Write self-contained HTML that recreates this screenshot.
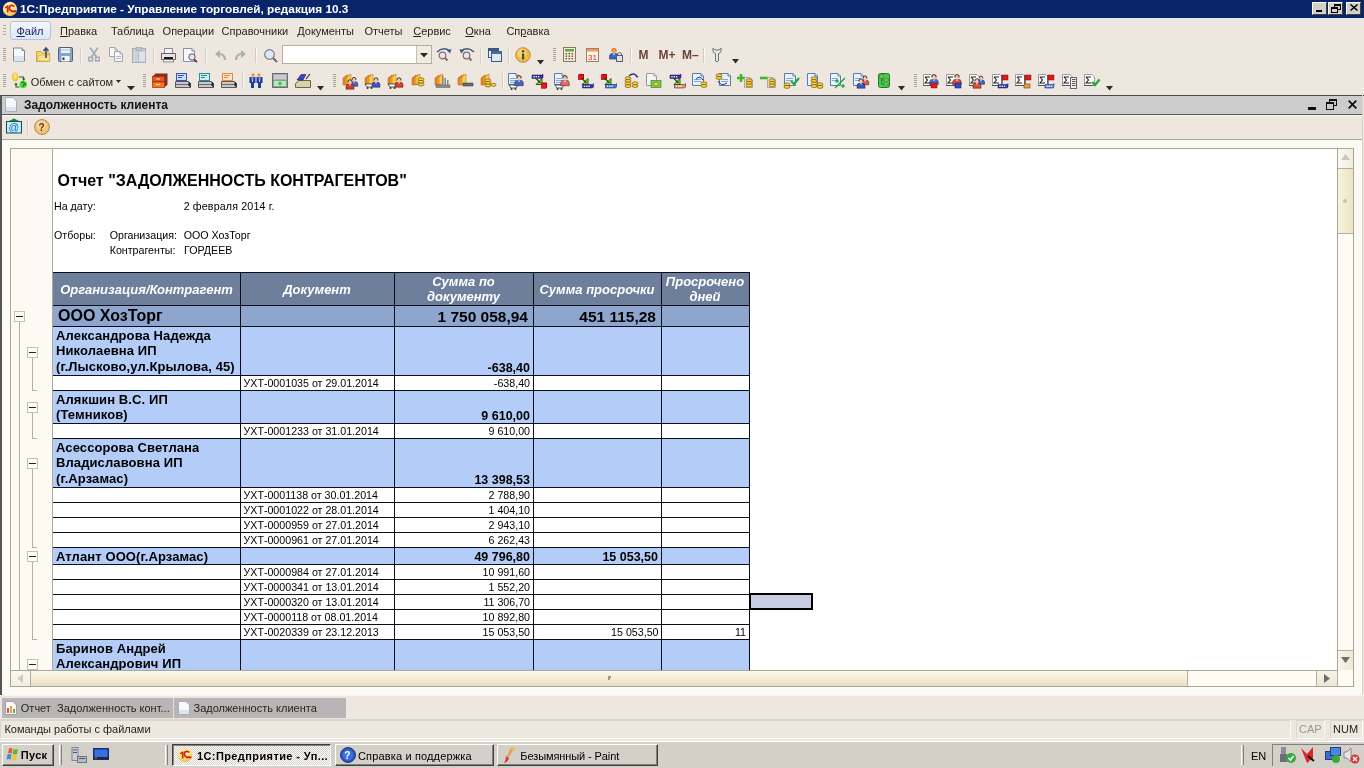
<!DOCTYPE html><html><head><meta charset="utf-8"><style>
*{box-sizing:border-box}
html,body{margin:0;padding:0}
body{width:1364px;height:768px;overflow:hidden;position:relative;background:#EEE7E0;font-family:"Liberation Sans",sans-serif;font-size:11px;color:#2a2418}
.a{position:absolute}
html{will-change:transform}
.nw{white-space:nowrap}
svg{position:absolute;overflow:visible}
#title{left:0;top:0;width:1364px;height:18px;background:#0A246A}
.wbtn{width:16px;height:14px;background:#D4D0C8;border-top:1px solid #fff;border-left:1px solid #fff;border-right:1px solid #404040;border-bottom:1px solid #404040}
.grip{width:3px;background:repeating-linear-gradient(to bottom,#B3AA9C 0 1px,transparent 1px 3px)}
.sep{width:2px;border-left:1px solid #CFC7BA;border-right:1px solid #FBF9F6}
.dd{width:0;height:0;border-left:4px solid transparent;border-right:4px solid transparent;border-top:4px solid #2a2418}
.cell{position:absolute;overflow:hidden;white-space:nowrap}
.hl{position:absolute;height:1px;background:#0D0D1A}
.vl{position:absolute;width:1px;background:#0D0D1A}
.doc{font-size:10.67px;color:#000;line-height:12px}
.bn{font-weight:bold;color:#000}
</style></head><body>
<div id="title" class="a">
<svg style="left:2px;top:1px" width="16" height="16" viewBox="0 0 16 16"><defs><radialGradient id="lg" cx="0.45" cy="0.35" r="0.7"><stop offset="0" stop-color="#FFFBE8"/><stop offset="0.6" stop-color="#FBE27A"/><stop offset="1" stop-color="#F0B040"/></radialGradient></defs><circle cx="8" cy="8" r="7.2" fill="url(#lg)"/><path d="M2.8 6.2L5 4.6H6.6V11.6H4.8V6.6L3.4 7.4Z" fill="#C8300E"/><path d="M12.2 5.6Q11.2 4.3 9.6 4.4Q7.4 4.6 7.4 7.3Q7.5 9.4 9.4 9.6" fill="none" stroke="#D8200E" stroke-width="1.7"/><rect x="8.8" y="9.3" width="5.6" height="2" fill="#D8200E"/></svg>
<div class="a nw" style="left:20px;top:2px;color:#fff;font-weight:bold;font-size:11.8px;letter-spacing:0px;line-height:14px">1С:Предприятие - Управление торговлей, редакция 10.3</div>
<div class="a wbtn" style="left:1312px;top:2px;width:15px;height:13px"></div>
<div class="a wbtn" style="left:1328px;top:2px;width:15px;height:13px"></div>
<div class="a wbtn" style="left:1346px;top:2px;width:15px;height:13px"></div>
<div class="a" style="left:1316px;top:10px;width:6px;height:2px;background:#000"></div>
<svg style="left:1331px;top:4px" width="10" height="9"><rect x="3.5" y="0.5" width="6" height="5" fill="none" stroke="#000"/><rect x="3" y="0" width="7" height="2" fill="#000"/><rect x="0.5" y="3.5" width="6" height="5" fill="#D4D0C8" stroke="#000"/><rect x="0" y="3" width="7" height="2" fill="#000"/></svg>
<svg style="left:1350px;top:4px" width="8" height="7"><path d="M0.5 0.5L7.5 6.5M7.5 0.5L0.5 6.5" stroke="#000" stroke-width="1.6"/></svg>
</div>
<div class="a" style="left:0;top:18px;width:1364px;height:1px;background:#E6ECEE"></div>
<div class="a grip" style="left:3px;top:25px;height:12px"></div>
<div class="a" style="left:10px;top:21px;width:41px;height:19px;border:1px solid #B6C1DC;border-radius:3px;background:linear-gradient(#F4F7FD,#DCE6F8)"></div>
<div class="a nw" style="left:16.4px;top:24px;line-height:14px;color:#1F2A66"><u>Ф</u>айл</div>
<div class="a nw" style="left:60px;top:24px;line-height:14px;color:#2a2418"><u>П</u>равка</div>
<div class="a nw" style="left:110.9px;top:24px;line-height:14px;color:#2a2418">Таблица</div>
<div class="a nw" style="left:162.6px;top:24px;line-height:14px;color:#2a2418">Операции</div>
<div class="a nw" style="left:221.5px;top:24px;line-height:14px;color:#2a2418">Справочники</div>
<div class="a nw" style="left:297.2px;top:24px;line-height:14px;color:#2a2418">Документы</div>
<div class="a nw" style="left:364.5px;top:24px;line-height:14px;color:#2a2418">Отчеты</div>
<div class="a nw" style="left:413.2px;top:24px;line-height:14px;color:#2a2418"><u>С</u>ервис</div>
<div class="a nw" style="left:465.3px;top:24px;line-height:14px;color:#2a2418"><u>О</u>кна</div>
<div class="a nw" style="left:506.4px;top:24px;line-height:14px;color:#2a2418">Сп<u>р</u>авка</div>
<div class="a" style="left:3px;top:48px;width:3px;height:14px;background:repeating-linear-gradient(to bottom,#ABA397 0 1px,transparent 1px 2px)"></div>
<svg style="left:13px;top:47px" width="16" height="16" viewBox="0 0 16 16"><path d="M0.5 1.0H9L11.5 3.5V14.0H0.5Z" fill="#F7F9FD" stroke="#7C8593"/><path d="M9 1.0V3.5H11.5" fill="#DDE6F0" stroke="#7C8593"/><rect x="1" y="9" width="10" height="5" fill="#DCE5F4"/></svg>
<svg style="left:36px;top:46px" width="16" height="16" viewBox="0 0 16 16"><path d="M0.5 5.5H5L6.5 7H13.5V15.5H0.5Z" fill="#F4D870" stroke="#C8A040"/><path d="M1 15L3 9H14L13.5 15.5Z" fill="#F8E48A" stroke="#C8A040" stroke-width="0.6"/><path d="M10 12V2.5M7.5 5L10 2L12.5 5" stroke="#3E4E66" stroke-width="1.6" fill="none"/></svg>
<svg style="left:58px;top:47px" width="16" height="16" viewBox="0 0 16 16"><rect x="0.5" y="0.5" width="14" height="14" rx="1" fill="#86A6C4" stroke="#4A6078"/><rect x="3" y="1" width="9" height="5" fill="#E8F0F8"/><rect x="3" y="2.5" width="9" height="1" fill="#A8C0D8"/><rect x="3.5" y="9" width="8" height="5.5" fill="#F2F4F6"/><rect x="4.5" y="10.5" width="2" height="2.5" fill="#2A3A4A"/></svg>
<div class="a" style="left:80px;top:48px;width:2px;height:15px;border-left:1px solid #D3CCC0;border-right:1px solid #FAF8F4"></div>
<svg style="left:88px;top:47px" width="12" height="15" viewBox="0 0 12 15"><path d="M2 0.5L8.5 10M10 0.5L3.5 10" stroke="#A4AAB6" stroke-width="1.8"/><rect x="0.8" y="10.3" width="3.6" height="3.6" fill="none" stroke="#A4AAB6" stroke-width="1.5"/><rect x="7.6" y="10.3" width="3.6" height="3.6" fill="none" stroke="#A4AAB6" stroke-width="1.5"/></svg>
<svg style="left:109px;top:47px" width="16" height="16" viewBox="0 0 16 16"><path d="M0.5 0.5H6L8.5 3V9.5H0.5Z" fill="#F6F7FA" stroke="#A0A4AC"/><path d="M6 0.5V3H8.5" fill="#DDE6F0" stroke="#A0A4AC"/><path d="M5.5 4.5H11L13.5 7V14.5H5.5Z" fill="#F6F7FA" stroke="#A0A4AC"/><path d="M11 4.5V7H13.5" fill="#DDE6F0" stroke="#A0A4AC"/><rect x="7" y="9" width="5" height="1" fill="#B8BCC4"/><rect x="7" y="11" width="5" height="1" fill="#B8BCC4"/></svg>
<svg style="left:132px;top:47px" width="16" height="16" viewBox="0 0 16 16"><rect x="0.5" y="1.5" width="13" height="14" fill="#CDD2DA" stroke="#A6ABB4"/><rect x="4" y="0.5" width="6" height="3" fill="#BFC3CA" stroke="#A6ABB4" stroke-width="0.8"/><rect x="6.5" y="4" width="7" height="11" fill="#DCE2EC" stroke="#B0B5BE" stroke-width="0.8"/></svg>
<div class="a" style="left:153px;top:48px;width:2px;height:15px;border-left:1px solid #D3CCC0;border-right:1px solid #FAF8F4"></div>
<svg style="left:161px;top:48px" width="15" height="14" viewBox="0 0 15 14"><rect x="3.5" y="0.5" width="8" height="5" fill="#F4F6FA" stroke="#8A8E96"/><path d="M0.5 5.5H14.5V11.5H0.5Z" fill="#E8E6E2" stroke="#66625E"/><rect x="3" y="9" width="9" height="3" fill="#1A1A1A"/><rect x="2.5" y="11.5" width="10" height="2.5" fill="#F0F0F0" stroke="#77736E" stroke-width="0.8"/></svg>
<svg style="left:183px;top:48px" width="16" height="16" viewBox="0 0 16 16"><path d="M0.5 0.5H9L11.5 3V13.5H0.5Z" fill="#F6F8FC" stroke="#8A929E"/><path d="M9 0.5V3H11.5" fill="#DDE6F0" stroke="#8A929E"/><circle cx="9" cy="9" r="3.2" fill="#DDE6F2" stroke="#5A5A5A" stroke-width="1"/><path d="M11 11.5L14 14" stroke="#6A3A2A" stroke-width="2"/></svg>
<div class="a" style="left:205px;top:48px;width:2px;height:15px;border-left:1px solid #D3CCC0;border-right:1px solid #FAF8F4"></div>
<svg style="left:215px;top:50px" width="11" height="11" viewBox="0 0 11 11"><path d="M10 10Q10 4 4 4" stroke="#A8B4A8" stroke-width="2.2" fill="none"/><path d="M0 4L5 0V8Z" fill="#A8B4A8"/></svg>
<svg style="left:235px;top:50px" width="11" height="11" viewBox="0 0 11 11"><path d="M1 10Q1 4 7 4" stroke="#A8B4A8" stroke-width="2.2" fill="none"/><path d="M11 4L6 0V8Z" fill="#A8B4A8"/></svg>
<div class="a" style="left:255px;top:48px;width:2px;height:15px;border-left:1px solid #D3CCC0;border-right:1px solid #FAF8F4"></div>
<svg style="left:264px;top:49px" width="14" height="14" viewBox="0 0 14 14"><circle cx="5.5" cy="5.5" r="4.8" fill="#DCE8F8" stroke="#7A7E86" stroke-width="1.2"/><path d="M9 9L13 13" stroke="#7A6A60" stroke-width="2.2"/></svg>
<div class="a" style="left:282px;top:45px;width:150px;height:19px;background:#FFFFFF;border:1px solid #B7AF98"></div>
<div class="a" style="left:416px;top:46px;width:15px;height:17px;background:#F1ECE2;border-left:1px solid #C8C0AC"></div>
<svg style="left:420px;top:53px" width="8" height="5"><path d="M0 0H8L4.0 4.5Z" fill="#2F2A22"/></svg>
<svg style="left:436px;top:47px" width="16" height="15" viewBox="0 0 16 15"><path d="M1 5Q7 -1 14 4" stroke="#3E5A82" stroke-width="1.6" fill="none"/><path d="M15.5 2L14 6.5L11 3.5Z" fill="#3E5A82"/><circle cx="6.5" cy="8.5" r="3.3" fill="#E6E8F0" stroke="#8A6A66" stroke-width="1.2"/><path d="M9 11L11.5 13.5" stroke="#8A6A66" stroke-width="2"/></svg>
<svg style="left:459px;top:47px" width="16" height="15" viewBox="0 0 16 15"><path d="M15 5Q9 -1 2 4" stroke="#3E5A82" stroke-width="1.6" fill="none"/><path d="M0.5 2L2 6.5L5 3.5Z" fill="#3E5A82"/><circle cx="7.5" cy="8.5" r="3.3" fill="#E6E8F0" stroke="#8A6A66" stroke-width="1.2"/><path d="M10 11L12.5 13.5" stroke="#8A6A66" stroke-width="2"/></svg>
<div class="a" style="left:480px;top:48px;width:2px;height:15px;border-left:1px solid #D3CCC0;border-right:1px solid #FAF8F4"></div>
<svg style="left:488px;top:48px" width="14" height="14" viewBox="0 0 14 14"><rect x="0.5" y="0.5" width="10" height="9" fill="#E8EEF6" stroke="#3E5A82"/><rect x="0.5" y="0.5" width="10" height="2.5" fill="#3E5A82"/><rect x="3.5" y="3.5" width="10" height="10" fill="#DDE8F6" stroke="#3E5A82"/><rect x="3.5" y="3.5" width="10" height="2.5" fill="#4E6E9A"/></svg>
<div class="a" style="left:508px;top:48px;width:2px;height:15px;border-left:1px solid #D3CCC0;border-right:1px solid #FAF8F4"></div>
<svg style="left:515px;top:47px" width="16" height="16" viewBox="0 0 16 16"><circle cx="8" cy="8" r="7.3" fill="#F3B94A" stroke="#B07818" stroke-width="0.8"/><circle cx="7" cy="6" r="4.5" fill="#FAD88A" opacity="0.7"/><rect x="7" y="6.5" width="2.2" height="6" fill="#3A5A10"/><circle cx="8.1" cy="4.2" r="1.2" fill="#3A5A10"/></svg>
<svg style="left:537px;top:60px" width="7" height="5"><path d="M0 0H7L3.5 4.5Z" fill="#2F2A22"/></svg>
<div class="a" style="left:553px;top:48px;width:3px;height:13px;background:repeating-linear-gradient(to bottom,#ABA397 0 1px,transparent 1px 2px)"></div>
<svg style="left:563px;top:47px" width="13" height="15" viewBox="0 0 13 15"><rect x="0.5" y="0.5" width="12" height="14" fill="#F6EEDC" stroke="#8A7A5A"/><rect x="2" y="2" width="9" height="2.5" fill="#5AAA4A"/><rect x="2.5" y="6.0" width="1.6" height="1.4" fill="#7A5028"/><rect x="2.5" y="8.5" width="1.6" height="1.4" fill="#7A5028"/><rect x="2.5" y="11.0" width="1.6" height="1.4" fill="#7A5028"/><rect x="5.5" y="6.0" width="1.6" height="1.4" fill="#7A5028"/><rect x="5.5" y="8.5" width="1.6" height="1.4" fill="#7A5028"/><rect x="5.5" y="11.0" width="1.6" height="1.4" fill="#7A5028"/><rect x="8.5" y="6.0" width="1.6" height="1.4" fill="#7A5028"/><rect x="8.5" y="8.5" width="1.6" height="1.4" fill="#7A5028"/><rect x="8.5" y="11.0" width="1.6" height="1.4" fill="#7A5028"/></svg>
<svg style="left:586px;top:47px" width="13" height="15" viewBox="0 0 13 15"><rect x="0.5" y="1.5" width="12" height="13" fill="#FBF3E8" stroke="#A08060"/><rect x="1" y="2" width="11" height="2.5" fill="#F29A5A"/><text x="2" y="12.5" font-family="Liberation Sans" font-size="8" fill="#D2381E">31</text></svg>
<svg style="left:609px;top:48px" width="15" height="15" viewBox="0 0 15 15"><path d="M0.5 11.1V7.95Q0.5 5.34 5 5.34Q9.5 5.34 9.5 7.95V11.1Z" fill="#2E6AD0" stroke="#3A1A1A" stroke-width="0.5"/><path d="M3.65 5.52L5 7.5L6.35 5.52Z" fill="#FFFFFF" opacity="0.8"/><circle cx="5" cy="3" r="2.3400000000000003" fill="#F2A848"/><path d="M2.6599999999999997 3.54Q2.48 0.2999999999999998 5 0.48Q7.52 0.2999999999999998 7.34 3.54" fill="none" stroke="#C86A10" stroke-width="0.9900000000000001"/><rect x="7.5" y="7.5" width="6" height="6" fill="#DDE3EA" stroke="#556070"/><path d="M8.5 7.5V5.5Q10.5 3.5 12.5 5.5V7.5" fill="none" stroke="#556070"/></svg>
<div class="a" style="left:630px;top:48px;width:2px;height:15px;border-left:1px solid #D3CCC0;border-right:1px solid #FAF8F4"></div>
<div class="a nw" style="left:638.5px;top:49px;font-weight:bold;font-size:12px;line-height:13px;color:#6A4634">M</div>
<div class="a nw" style="left:658.5px;top:49px;font-weight:bold;font-size:12px;line-height:13px;color:#6A4634">M+</div>
<div class="a nw" style="left:682px;top:49px;font-weight:bold;font-size:12px;line-height:13px;color:#6A4634">M&#8211;</div>
<div class="a" style="left:703px;top:48px;width:2px;height:15px;border-left:1px solid #D3CCC0;border-right:1px solid #FAF8F4"></div>
<svg style="left:712px;top:47px" width="10" height="16" viewBox="0 0 10 16"><path d="M1 1V4Q1 6 3.5 6.5V14Q5 15.5 6.5 14V6.5Q9 6 9 4V1L7 3H3Z" fill="#E4E6EA" stroke="#6E7480" stroke-width="1"/></svg>
<svg style="left:732px;top:59px" width="7" height="5"><path d="M0 0H7L3.5 4.5Z" fill="#2F2A22"/></svg>
<div class="a" style="left:3px;top:74px;width:3px;height:13px;background:repeating-linear-gradient(to bottom,#ABA397 0 1px,transparent 1px 2px)"></div>
<svg style="left:11px;top:72px" width="16" height="16" viewBox="0 0 16 16"><ellipse cx="4.2" cy="5" rx="3.2" ry="4.6" fill="#F2C23A"/><ellipse cx="4.2" cy="4.2" rx="1.8" ry="3" fill="#FBE070"/><path d="M8 5H12.5V7.5" stroke="#1E6A1E" stroke-width="1.1" fill="none"/><path d="M11 6.5H14.5L12.7 9Z" fill="#1E6A1E"/><circle cx="12.2" cy="12.5" r="3.7" fill="#4ED838"/><path d="M10 10.5Q12 9.5 13 11T11.5 14.5M13.5 13Q15 13 14.5 11" stroke="#1A8A1A" stroke-width="1.2" fill="none"/><path d="M8.5 15H5V12" stroke="#1E6A1E" stroke-width="1.1" fill="none"/><path d="M3.2 13H6.8L5 10.5Z" fill="#1E6A1E"/></svg>
<div class="a nw" style="left:30.8px;top:76px;line-height:13px;color:#2a2418">Обмен с сайтом</div>
<svg style="left:116px;top:80px" width="5" height="3" viewBox="0 0 5 3"><path d="M0 0H5L2.5 3Z" fill="#2F2A22"/></svg>
<svg style="left:127px;top:86px" width="8" height="5"><path d="M0 0H8L4.0 4.5Z" fill="#2F2A22"/></svg>
<div class="a" style="left:143px;top:74px;width:3px;height:13px;background:repeating-linear-gradient(to bottom,#ABA397 0 1px,transparent 1px 2px)"></div>
<svg style="left:152px;top:73px" width="16" height="16" viewBox="0 0 16 16"><path d="M0.5 3.5L3.5 0.5H15.5V11.5L12.5 14.5H0.5Z" fill="#8A2A1A"/><rect x="0.5" y="3.5" width="12" height="5" fill="#E8581E" stroke="#9A3410" stroke-width="0.6"/><rect x="0.5" y="9" width="12" height="5.5" fill="#F07A2A" stroke="#9A3410" stroke-width="0.6"/><rect x="4" y="5.5" width="4" height="1" fill="#FFE0B0"/><rect x="4" y="11" width="4" height="1" fill="#FFE0B0"/></svg>
<svg style="left:175px;top:73px" width="16" height="16" viewBox="0 0 16 16"><rect x="1.5" y="0.5" width="10" height="7" fill="#C8DCF8" stroke="#3A56B0"/><rect x="3" y="2" width="6" height="1" fill="#3A56B0"/><rect x="3" y="4" width="4" height="1" fill="#3A56B0"/><path d="M0.5 8.5H13.5L15.5 10.5V14.5H0.5Z" fill="#C8C8C8" stroke="#3A3A3A" stroke-width="0.8"/><rect x="1" y="11" width="14" height="1" fill="#6A6A6A"/><path d="M13.5 8.5L15.5 10.5V14.5L13.5 12.5Z" fill="#222"/></svg>
<svg style="left:198px;top:73px" width="16" height="16" viewBox="0 0 16 16"><rect x="1.5" y="0.5" width="10" height="7" fill="#C8F0F0" stroke="#2E8A9A"/><rect x="3" y="2" width="6" height="1" fill="#2E8A9A"/><rect x="3" y="4" width="4" height="1" fill="#2E8A9A"/><path d="M0.5 8.5H13.5L15.5 10.5V14.5H0.5Z" fill="#C8C8C8" stroke="#3A3A3A" stroke-width="0.8"/><rect x="1" y="11" width="14" height="1" fill="#6A6A6A"/><path d="M13.5 8.5L15.5 10.5V14.5L13.5 12.5Z" fill="#222"/></svg>
<svg style="left:221px;top:73px" width="16" height="16" viewBox="0 0 16 16"><rect x="1.5" y="0.5" width="10" height="7" fill="#FBE4C8" stroke="#E08A3A"/><rect x="3" y="2" width="6" height="1" fill="#E08A3A"/><rect x="3" y="4" width="4" height="1" fill="#E08A3A"/><path d="M0.5 8.5H13.5L15.5 10.5V14.5H0.5Z" fill="#C8C8C8" stroke="#3A3A3A" stroke-width="0.8"/><rect x="1" y="11" width="14" height="1" fill="#6A6A6A"/><path d="M13.5 8.5L15.5 10.5V14.5L13.5 12.5Z" fill="#222"/></svg>
<div class="a" style="left:242px;top:73px;width:2px;height:16px;border-left:1px solid #D3CCC0;border-right:1px solid #FAF8F4"></div>
<svg style="left:249px;top:73px" width="14" height="16" viewBox="0 0 14 16"><circle cx="4" cy="2" r="1.8" fill="#D89A5A"/><circle cx="10" cy="2" r="1.8" fill="#D89A5A"/><path d="M0.5 4H6.5V10H5V15H2V10H0.5Z" fill="#1E3A9A"/><path d="M7.5 4H13.5V10H12V15H9V10H7.5Z" fill="#1E3A9A"/><path d="M3 4L3.5 9L4 4M10 4L10.5 9L11 4" stroke="#fff" stroke-width="0.6"/></svg>
<svg style="left:272px;top:73px" width="16" height="16" viewBox="0 0 16 16"><rect x="0.5" y="0.5" width="15" height="14" fill="#A8ACAE" stroke="#6A6E70"/><rect x="2" y="2" width="12" height="4" fill="#C8CCCE"/><rect x="1.5" y="7.5" width="13" height="6" fill="#B8E8C0" stroke="#5A9A6A" stroke-width="0.6"/><circle cx="8" cy="10.5" r="2" fill="#6ABA7A"/></svg>
<svg style="left:295px;top:73px" width="16" height="16" viewBox="0 0 16 16"><path d="M0.5 10.5L4 7.5H15.5V14.5H0.5Z" fill="#D8D4A8" stroke="#6A6640"/><path d="M2 7L6 1.5H11L8 7Z" fill="#3A48B8" stroke="#1A2470" stroke-width="0.6"/><path d="M11 6L15 1" stroke="#2A2A2A" stroke-width="1.2"/></svg>
<svg style="left:317px;top:86px" width="7" height="5"><path d="M0 0H7L3.5 4.5Z" fill="#2F2A22"/></svg>
<div class="a" style="left:333px;top:74px;width:3px;height:13px;background:repeating-linear-gradient(to bottom,#ABA397 0 1px,transparent 1px 2px)"></div>
<svg style="left:343px;top:73px" width="16" height="16" viewBox="0 0 16 16"><path d="M0 5.0L4 2.0V12.0H0Z" fill="#E9822A" stroke="#C0621A" stroke-width="0.5"/><path d="M2 4.5L6 1.5V11.5H2Z" fill="#F2A93A" stroke="#C0621A" stroke-width="0.5"/><path d="M4 4.0L8 1.0V11.0H4Z" fill="#F7D447" stroke="#C0621A" stroke-width="0.5"/><path d="M7.25 13.25V10.625Q7.25 8.45 11 8.45Q14.75 8.45 14.75 10.625V13.25Z" fill="#3E6AC8" stroke="#3A1A1A" stroke-width="0.5"/><path d="M9.875 8.6L11 10.25L12.125 8.6Z" fill="#FFFFFF" opacity="0.8"/><circle cx="11" cy="6.5" r="1.9500000000000002" fill="#F6C8B0"/><path d="M9.05 6.95Q8.9 4.25 11 4.4Q13.1 4.25 12.95 6.95" fill="none" stroke="#2A1A10" stroke-width="0.8250000000000001"/><path d="M3.0 16.2V13.4Q3.0 11.08 7 11.08Q11.0 11.08 11.0 13.4V16.2Z" fill="#D83A2A" stroke="#3A1A1A" stroke-width="0.5"/><path d="M5.8 11.24L7 13.0L8.2 11.24Z" fill="#FFFFFF" opacity="0.8"/><circle cx="7" cy="9" r="2.08" fill="#F6C8B0"/><path d="M4.92 9.48Q4.76 6.6 7 6.76Q9.24 6.6 9.08 9.48" fill="none" stroke="#2A1A10" stroke-width="0.8800000000000001"/></svg>
<svg style="left:365px;top:73px" width="16" height="16" viewBox="0 0 16 16"><path d="M0 5.0L4 2.0V12.0H0Z" fill="#E9822A" stroke="#C0621A" stroke-width="0.5"/><path d="M2 4.5L6 1.5V11.5H2Z" fill="#F2A93A" stroke="#C0621A" stroke-width="0.5"/><path d="M4 4.0L8 1.0V11.0H4Z" fill="#F7D447" stroke="#C0621A" stroke-width="0.5"/><path d="M0 11H9L7 14H2Z" fill="#fff" stroke="#333" stroke-width="0.8"/><circle cx="2.5" cy="15" r="1" fill="#333"/><circle cx="6.5" cy="15" r="1" fill="#333"/><path d="M7.0 14.2V11.4Q7.0 9.08 11 9.08Q15.0 9.08 15.0 11.4V14.2Z" fill="#3A52C8" stroke="#3A1A1A" stroke-width="0.5"/><path d="M9.8 9.24L11 11.0L12.2 9.24Z" fill="#FFFFFF" opacity="0.8"/><circle cx="11" cy="7" r="2.08" fill="#F6C8B0"/><path d="M8.92 7.48Q8.76 4.6 11 4.76Q13.24 4.6 13.08 7.48" fill="none" stroke="#2A1A10" stroke-width="0.8800000000000001"/></svg>
<svg style="left:388px;top:73px" width="16" height="16" viewBox="0 0 16 16"><path d="M0 5.0L4 2.0V12.0H0Z" fill="#E9822A" stroke="#C0621A" stroke-width="0.5"/><path d="M2 4.5L6 1.5V11.5H2Z" fill="#F2A93A" stroke="#C0621A" stroke-width="0.5"/><path d="M4 4.0L8 1.0V11.0H4Z" fill="#F7D447" stroke="#C0621A" stroke-width="0.5"/><path d="M0 11H9L7 14H2Z" fill="#fff" stroke="#333" stroke-width="0.8"/><circle cx="2.5" cy="15" r="1" fill="#333"/><circle cx="6.5" cy="15" r="1" fill="#333"/><path d="M7.0 14.2V11.4Q7.0 9.08 11 9.08Q15.0 9.08 15.0 11.4V14.2Z" fill="#D8402A" stroke="#3A1A1A" stroke-width="0.5"/><path d="M9.8 9.24L11 11.0L12.2 9.24Z" fill="#FFFFFF" opacity="0.8"/><circle cx="11" cy="7" r="2.08" fill="#F6C8B0"/><path d="M8.92 7.48Q8.76 4.6 11 4.76Q13.24 4.6 13.08 7.48" fill="none" stroke="#2A1A10" stroke-width="0.8800000000000001"/></svg>
<svg style="left:412px;top:73px" width="16" height="16" viewBox="0 0 16 16"><path d="M0 5.0L4 2.0V12.0H0Z" fill="#E9822A" stroke="#C0621A" stroke-width="0.5"/><path d="M2 4.5L6 1.5V11.5H2Z" fill="#F2A93A" stroke="#C0621A" stroke-width="0.5"/><path d="M4 4.0L8 1.0V11.0H4Z" fill="#F7D447" stroke="#C0621A" stroke-width="0.5"/><ellipse cx="9.0" cy="6.3" rx="3.0" ry="1.5" fill="#F6CF3A" stroke="#7A5A10" stroke-width="0.7"/><ellipse cx="9.0" cy="8.9" rx="3.0" ry="1.5" fill="#F6CF3A" stroke="#7A5A10" stroke-width="0.7"/><ellipse cx="9.0" cy="11.5" rx="3.0" ry="1.5" fill="#F6CF3A" stroke="#7A5A10" stroke-width="0.7"/></svg>
<svg style="left:435px;top:73px" width="16" height="16" viewBox="0 0 16 16"><path d="M0 5.0L4 2.0V12.0H0Z" fill="#E9822A" stroke="#C0621A" stroke-width="0.5"/><path d="M2 4.5L6 1.5V11.5H2Z" fill="#F2A93A" stroke="#C0621A" stroke-width="0.5"/><path d="M4 4.0L8 1.0V11.0H4Z" fill="#F7D447" stroke="#C0621A" stroke-width="0.5"/><rect x="7" y="3" width="1.5" height="9" fill="#888"/><rect x="9.5" y="5" width="1.5" height="7" fill="#888"/><rect x="12" y="7" width="1.5" height="5" fill="#888"/><rect x="1" y="12" width="14" height="2.5" fill="#8A8E94" stroke="#555" stroke-width="0.5"/></svg>
<svg style="left:458px;top:73px" width="16" height="16" viewBox="0 0 16 16"><path d="M0 5.0L4 2.0V12.0H0Z" fill="#E9822A" stroke="#C0621A" stroke-width="0.5"/><path d="M2 4.5L6 1.5V11.5H2Z" fill="#F2A93A" stroke="#C0621A" stroke-width="0.5"/><path d="M4 4.0L8 1.0V11.0H4Z" fill="#F7D447" stroke="#C0621A" stroke-width="0.5"/><rect x="5" y="10" width="10" height="3" fill="#6A6E74" stroke="#333" stroke-width="0.5"/></svg>
<svg style="left:481px;top:73px" width="16" height="16" viewBox="0 0 16 16"><path d="M0 5.0L4 2.0V12.0H0Z" fill="#E9822A" stroke="#C0621A" stroke-width="0.5"/><path d="M2 4.5L6 1.5V11.5H2Z" fill="#F2A93A" stroke="#C0621A" stroke-width="0.5"/><path d="M4 4.0L8 1.0V11.0H4Z" fill="#F7D447" stroke="#C0621A" stroke-width="0.5"/><ellipse cx="7.0" cy="7.3" rx="3.0" ry="1.5" fill="#F6CF3A" stroke="#7A5A10" stroke-width="0.7"/><ellipse cx="7.0" cy="9.9" rx="3.0" ry="1.5" fill="#F6CF3A" stroke="#7A5A10" stroke-width="0.7"/><ellipse cx="7.0" cy="12.5" rx="3.0" ry="1.5" fill="#F6CF3A" stroke="#7A5A10" stroke-width="0.7"/><ellipse cx="12.5" cy="11.8" rx="2.5" ry="1.5" fill="#F6CF3A" stroke="#7A5A10" stroke-width="0.7"/></svg>
<div class="a" style="left:502px;top:73px;width:2px;height:16px;border-left:1px solid #D3CCC0;border-right:1px solid #FAF8F4"></div>
<svg style="left:508px;top:73px" width="16" height="16" viewBox="0 0 16 16"><path d="M0.5 0.5H8L10.5 3V11.5H0.5Z" fill="#E8F2FC" stroke="#5A7EA6"/><path d="M8 0.5V3H10.5" fill="#DDE6F0" stroke="#5A7EA6"/><rect x="2" y="5" width="6" height="1" fill="#7FA9D6"/><rect x="2" y="7" width="6" height="1" fill="#7FA9D6"/><rect x="2" y="9" width="6" height="1" fill="#7FA9D6"/><path d="M1 12H10L8 15H3Z" fill="#fff" stroke="#333" stroke-width="0.8"/><circle cx="3.5" cy="16" r="1" fill="#333"/><circle cx="7.5" cy="16" r="1" fill="#333"/><path d="M6.75 12.649999999999999V9.675Q6.75 7.21 11 7.21Q15.25 7.21 15.25 9.675V12.649999999999999Z" fill="#3A68D0" stroke="#3A1A1A" stroke-width="0.5"/><path d="M9.725 7.38L11 9.25L12.275 7.38Z" fill="#FFFFFF" opacity="0.8"/><circle cx="11" cy="5" r="2.21" fill="#F6C8B0"/><path d="M8.79 5.51Q8.620000000000001 2.45 11 2.62Q13.379999999999999 2.45 13.21 5.51" fill="none" stroke="#2A1A10" stroke-width="0.935"/></svg>
<svg style="left:531px;top:73px" width="16" height="16" viewBox="0 0 16 16"><path d="M1 2.0H11L12 1.0V4.5L11 5.5H1Z" fill="#3A28A8" stroke="#12124A" stroke-width="0.5"/><rect x="2.3" y="3.1" width="1.4" height="1.3" fill="#fff"/><rect x="4.6" y="3.1" width="1.4" height="1.3" fill="#fff"/><rect x="6.8999999999999995" y="3.1" width="1.4" height="1.3" fill="#fff"/><path d="M11.0 5.5V11.5H5.0Z" fill="#92DA3A" stroke="#14500A" stroke-width="0.9"/><path d="M4.5 5L9.5 10" stroke="#14500A" stroke-width="1.2"/><rect x="10" y="10.5" width="5" height="5" fill="#D81010"/><path d="M10 10.5L11 9.5H16V14.5L15 15.5Z" fill="#B00808"/><rect x="10" y="10.5" width="5" height="5" fill="#E01A1A"/></svg>
<svg style="left:554px;top:73px" width="16" height="16" viewBox="0 0 16 16"><path d="M0.5 0.5H8L10.5 3V11.5H0.5Z" fill="#E8F2FC" stroke="#5A7EA6"/><path d="M8 0.5V3H10.5" fill="#DDE6F0" stroke="#5A7EA6"/><rect x="2" y="5" width="6" height="1" fill="#7FA9D6"/><rect x="2" y="7" width="6" height="1" fill="#7FA9D6"/><rect x="2" y="9" width="6" height="1" fill="#7FA9D6"/><path d="M1 12H10L8 15H3Z" fill="#fff" stroke="#333" stroke-width="0.8"/><circle cx="3.5" cy="16" r="1" fill="#333"/><circle cx="7.5" cy="16" r="1" fill="#333"/><path d="M6.75 12.649999999999999V9.675Q6.75 7.21 11 7.21Q15.25 7.21 15.25 9.675V12.649999999999999Z" fill="#E06A6A" stroke="#3A1A1A" stroke-width="0.5"/><path d="M9.725 7.38L11 9.25L12.275 7.38Z" fill="#FFFFFF" opacity="0.8"/><circle cx="11" cy="5" r="2.21" fill="#F6C8B0"/><path d="M8.79 5.51Q8.620000000000001 2.45 11 2.62Q13.379999999999999 2.45 13.21 5.51" fill="none" stroke="#2A1A10" stroke-width="0.935"/></svg>
<svg style="left:577px;top:73px" width="16" height="16" viewBox="0 0 16 16"><rect x="1" y="2" width="5" height="5" fill="#D81010"/><path d="M1 2L2 1H7V6L6 7Z" fill="#B00808"/><rect x="1" y="2" width="5" height="5" fill="#E01A1A"/><path d="M11.0 5.5V11.5H5.0Z" fill="#92DA3A" stroke="#14500A" stroke-width="0.9"/><path d="M4.5 5L9.5 10" stroke="#14500A" stroke-width="1.2"/><path d="M5.5 11.5H15.5L16.5 10.5V14L15.5 15H5.5Z" fill="#3434A8" stroke="#12124A" stroke-width="0.5"/><rect x="6.8" y="12.6" width="1.4" height="1.3" fill="#fff"/><rect x="9.1" y="12.6" width="1.4" height="1.3" fill="#fff"/><rect x="11.399999999999999" y="12.6" width="1.4" height="1.3" fill="#fff"/></svg>
<svg style="left:600px;top:73px" width="16" height="16" viewBox="0 0 16 16"><rect x="1" y="2" width="5" height="5" fill="#D81010"/><path d="M1 2L2 1H7V6L6 7Z" fill="#B00808"/><rect x="1" y="2" width="5" height="5" fill="#E01A1A"/><path d="M11.0 5.5V11.5H5.0Z" fill="#92DA3A" stroke="#14500A" stroke-width="0.9"/><path d="M4.5 5L9.5 10" stroke="#14500A" stroke-width="1.2"/><path d="M5.5 11.5H15.5L16.5 10.5V14L15.5 15H5.5Z" fill="#3A78D8" stroke="#12124A" stroke-width="0.5"/><rect x="6.8" y="12.6" width="1.4" height="1.3" fill="#fff"/><rect x="9.1" y="12.6" width="1.4" height="1.3" fill="#fff"/><rect x="11.399999999999999" y="12.6" width="1.4" height="1.3" fill="#fff"/></svg>
<svg style="left:625px;top:73px" width="16" height="16" viewBox="0 0 16 16"><ellipse cx="3.0" cy="5.3" rx="3.0" ry="1.5" fill="#F6CF3A" stroke="#7A5A10" stroke-width="0.7"/><ellipse cx="3.0" cy="7.8999999999999995" rx="3.0" ry="1.5" fill="#F6CF3A" stroke="#7A5A10" stroke-width="0.7"/><ellipse cx="3.0" cy="10.5" rx="3.0" ry="1.5" fill="#F6CF3A" stroke="#7A5A10" stroke-width="0.7"/><ellipse cx="3.0" cy="13.100000000000001" rx="3.0" ry="1.5" fill="#F6CF3A" stroke="#7A5A10" stroke-width="0.7"/><ellipse cx="10.0" cy="10.3" rx="3.0" ry="1.5" fill="#F6CF3A" stroke="#7A5A10" stroke-width="0.7"/><ellipse cx="10.0" cy="12.9" rx="3.0" ry="1.5" fill="#F6CF3A" stroke="#7A5A10" stroke-width="0.7"/><path d="M4 3Q8 -1 12 3" stroke="#2A3A6A" stroke-width="1.2" fill="none"/><path d="M10.5 3H13.5L12 5Z" fill="#2A3A6A"/></svg>
<svg style="left:646px;top:73px" width="16" height="16" viewBox="0 0 16 16"><path d="M0.5 0.5H8L10.5 3V12.5H0.5Z" fill="#F4F4F4" stroke="#9A9A9A"/><path d="M8 0.5V3H10.5" fill="#DDE6F0" stroke="#9A9A9A"/><rect x="5" y="7.5" width="10" height="7" fill="#7ACA5A" stroke="#2A7A1A" stroke-width="0.6"/><ellipse cx="10" cy="11" rx="2.5" ry="2" fill="#F6CF3A" stroke="#7A5A10" stroke-width="0.5"/></svg>
<svg style="left:669px;top:73px" width="16" height="16" viewBox="0 0 16 16"><path d="M1 2.0H11L12 1.0V4.5L11 5.5H1Z" fill="#3A28A8" stroke="#12124A" stroke-width="0.5"/><rect x="2.3" y="3.1" width="1.4" height="1.3" fill="#fff"/><rect x="4.6" y="3.1" width="1.4" height="1.3" fill="#fff"/><rect x="6.8999999999999995" y="3.1" width="1.4" height="1.3" fill="#fff"/><path d="M11.0 5.5V11.5H5.0Z" fill="#92DA3A" stroke="#14500A" stroke-width="0.9"/><path d="M4.5 5L9.5 10" stroke="#14500A" stroke-width="1.2"/><path d="M5.5 11.5H15.5L16.5 10.5V14L15.5 15H5.5Z" fill="#E89A50" stroke="#12124A" stroke-width="0.5"/><rect x="6.8" y="12.6" width="1.4" height="1.3" fill="#fff"/><rect x="9.1" y="12.6" width="1.4" height="1.3" fill="#fff"/><rect x="11.399999999999999" y="12.6" width="1.4" height="1.3" fill="#fff"/></svg>
<svg style="left:692px;top:73px" width="16" height="16" viewBox="0 0 16 16"><path d="M0.5 0.5H9L11.5 3V12.5H0.5Z" fill="#E8F2FC" stroke="#5A7EA6"/><path d="M9 0.5V3H11.5" fill="#DDE6F0" stroke="#5A7EA6"/><rect x="2" y="6" width="7" height="1" fill="#7FA9D6"/><rect x="2" y="8" width="7" height="1" fill="#7FA9D6"/><path d="M4 6Q8 2 11 7" stroke="#2A3A6A" stroke-width="1" fill="none"/><ellipse cx="12.0" cy="10.3" rx="3.0" ry="1.5" fill="#F6CF3A" stroke="#7A5A10" stroke-width="0.7"/><ellipse cx="12.0" cy="12.9" rx="3.0" ry="1.5" fill="#F6CF3A" stroke="#7A5A10" stroke-width="0.7"/></svg>
<svg style="left:715px;top:73px" width="16" height="16" viewBox="0 0 16 16"><path d="M4.5 0.5H13L15.5 3V12.5H4.5Z" fill="#E8F2FC" stroke="#5A7EA6"/><path d="M13 0.5V3H15.5" fill="#DDE6F0" stroke="#5A7EA6"/><rect x="6" y="6" width="7" height="1" fill="#7FA9D6"/><rect x="6" y="8" width="7" height="1" fill="#7FA9D6"/><path d="M12 10Q6 14 3 8" stroke="#2A3A6A" stroke-width="1" fill="none"/><ellipse cx="4.0" cy="2.3" rx="3.0" ry="1.5" fill="#F6CF3A" stroke="#7A5A10" stroke-width="0.7"/><ellipse cx="4.0" cy="4.9" rx="3.0" ry="1.5" fill="#F6CF3A" stroke="#7A5A10" stroke-width="0.7"/></svg>
<svg style="left:738px;top:73px" width="16" height="16" viewBox="0 0 16 16"><path d="M3 1V9M-1 5H7" stroke="#3AB828" stroke-width="2.6"/><path d="M6.5 4.5H12L14.5 7V14.5H6.5Z" fill="#E8E4DC" stroke="#B0A898"/><path d="M12 4.5V7H14.5" fill="#DDE6F0" stroke="#B0A898"/><ellipse cx="11.0" cy="7.3" rx="3.0" ry="1.5" fill="#F6CF3A" stroke="#7A5A10" stroke-width="0.7"/><ellipse cx="11.0" cy="9.9" rx="3.0" ry="1.5" fill="#F6CF3A" stroke="#7A5A10" stroke-width="0.7"/><ellipse cx="11.0" cy="12.5" rx="3.0" ry="1.5" fill="#F6CF3A" stroke="#7A5A10" stroke-width="0.7"/></svg>
<svg style="left:761px;top:73px" width="16" height="16" viewBox="0 0 16 16"><path d="M-1 5H7" stroke="#3AB828" stroke-width="2.6"/><path d="M6.5 4.5H12L14.5 7V14.5H6.5Z" fill="#E8E4DC" stroke="#B0A898"/><path d="M12 4.5V7H14.5" fill="#DDE6F0" stroke="#B0A898"/><ellipse cx="11.0" cy="7.3" rx="3.0" ry="1.5" fill="#F6CF3A" stroke="#7A5A10" stroke-width="0.7"/><ellipse cx="11.0" cy="9.9" rx="3.0" ry="1.5" fill="#F6CF3A" stroke="#7A5A10" stroke-width="0.7"/><ellipse cx="11.0" cy="12.5" rx="3.0" ry="1.5" fill="#F6CF3A" stroke="#7A5A10" stroke-width="0.7"/></svg>
<svg style="left:784px;top:73px" width="16" height="16" viewBox="0 0 16 16"><path d="M0.5 0.5H9L11.5 3V12.5H0.5Z" fill="#E8F2FC" stroke="#5A7EA6"/><path d="M9 0.5V3H11.5" fill="#DDE6F0" stroke="#5A7EA6"/><rect x="2" y="5" width="7" height="1" fill="#7FA9D6"/><rect x="2" y="7" width="7" height="1" fill="#7FA9D6"/><path d="M7 8L10 11L15 5" stroke="#28A83A" stroke-width="2.2" fill="none"/><ellipse cx="3.0" cy="11.3" rx="3.0" ry="1.5" fill="#F6CF3A" stroke="#7A5A10" stroke-width="0.7"/><ellipse cx="3.0" cy="13.9" rx="3.0" ry="1.5" fill="#F6CF3A" stroke="#7A5A10" stroke-width="0.7"/></svg>
<svg style="left:807px;top:73px" width="16" height="16" viewBox="0 0 16 16"><path d="M0.5 0.5H8L10.5 3V12.5H0.5Z" fill="#E8F2FC" stroke="#5A7EA6"/><path d="M8 0.5V3H10.5" fill="#DDE6F0" stroke="#5A7EA6"/><ellipse cx="7.0" cy="5.3" rx="3.0" ry="1.5" fill="#F6CF3A" stroke="#7A5A10" stroke-width="0.7"/><ellipse cx="7.0" cy="7.8999999999999995" rx="3.0" ry="1.5" fill="#F6CF3A" stroke="#7A5A10" stroke-width="0.7"/><ellipse cx="7.0" cy="10.5" rx="3.0" ry="1.5" fill="#F6CF3A" stroke="#7A5A10" stroke-width="0.7"/><ellipse cx="7.0" cy="13.100000000000001" rx="3.0" ry="1.5" fill="#F6CF3A" stroke="#7A5A10" stroke-width="0.7"/><ellipse cx="13.0" cy="11.3" rx="3.0" ry="1.5" fill="#F6CF3A" stroke="#7A5A10" stroke-width="0.7"/><ellipse cx="13.0" cy="13.9" rx="3.0" ry="1.5" fill="#F6CF3A" stroke="#7A5A10" stroke-width="0.7"/></svg>
<svg style="left:830px;top:73px" width="16" height="16" viewBox="0 0 16 16"><path d="M0.5 0.5H8L10.5 3V12.5H0.5Z" fill="#E8F2FC" stroke="#5A7EA6"/><path d="M8 0.5V3H10.5" fill="#DDE6F0" stroke="#5A7EA6"/><rect x="2" y="5" width="6" height="1" fill="#7FA9D6"/><rect x="2" y="7" width="6" height="1" fill="#7FA9D6"/><path d="M5 15L15 5" stroke="#28A83A" stroke-width="1.4"/><circle cx="7" cy="8" r="1.7" fill="#28A83A"/><circle cx="13" cy="13" r="1.7" fill="#28A83A"/></svg>
<svg style="left:853px;top:73px" width="16" height="16" viewBox="0 0 16 16"><path d="M0.5 0.5H8L10.5 3V12.5H0.5Z" fill="#E8F2FC" stroke="#5A7EA6"/><path d="M8 0.5V3H10.5" fill="#DDE6F0" stroke="#5A7EA6"/><rect x="2" y="5" width="6" height="1" fill="#7FA9D6"/><rect x="2" y="7" width="6" height="1" fill="#7FA9D6"/><path d="M8.25 11.75V9.125Q8.25 6.95 12 6.95Q15.75 6.95 15.75 9.125V11.75Z" fill="#E05A4A" stroke="#3A1A1A" stroke-width="0.5"/><path d="M10.875 7.1L12 8.75L13.125 7.1Z" fill="#FFFFFF" opacity="0.8"/><circle cx="12" cy="5" r="1.9500000000000002" fill="#F6C8B0"/><path d="M10.05 5.45Q9.9 2.75 12 2.9000000000000004Q14.1 2.75 13.95 5.45" fill="none" stroke="#2A1A10" stroke-width="0.8250000000000001"/><path d="M4.0 15.2V12.4Q4.0 10.08 8 10.08Q12.0 10.08 12.0 12.4V15.2Z" fill="#2E5BC8" stroke="#3A1A1A" stroke-width="0.5"/><path d="M6.8 10.24L8 12.0L9.2 10.24Z" fill="#FFFFFF" opacity="0.8"/><circle cx="8" cy="8" r="2.08" fill="#F6C8B0"/><path d="M5.92 8.48Q5.76 5.6 8 5.76Q10.24 5.6 10.08 8.48" fill="none" stroke="#2A1A10" stroke-width="0.8800000000000001"/></svg>
<svg style="left:878px;top:73px" width="12" height="15" viewBox="0 0 12 15"><rect x="0.5" y="0.5" width="11" height="14" rx="2" fill="#4AC84A" stroke="#1E7A1E"/><rect x="2" y="2" width="3" height="3" fill="#8AE88A" stroke="#1E5A1E" stroke-width="0.5"/><rect x="6" y="6" width="4" height="2" fill="#8AE88A" stroke="#1E5A1E" stroke-width="0.5"/><rect x="6" y="10" width="4" height="2" fill="#8AE88A" stroke="#1E5A1E" stroke-width="0.5"/><path d="M3.5 5V11H6M3.5 7H6" stroke="#1E5A1E" stroke-width="0.6" fill="none"/></svg>
<svg style="left:898px;top:86px" width="7" height="5"><path d="M0 0H7L3.5 4.5Z" fill="#2F2A22"/></svg>
<div class="a" style="left:914px;top:74px;width:3px;height:13px;background:repeating-linear-gradient(to bottom,#ABA397 0 1px,transparent 1px 2px)"></div>
<svg style="left:923px;top:73px" width="16" height="16" viewBox="0 0 16 16"><path d="M0.5 1.5H8L10.5 4V12.5H0.5Z" fill="#FBFBFB" stroke="#9A9A9A"/><path d="M2 4H7M2 4L4.5 7L2 10H7" fill="none" stroke="#222" stroke-width="1.1"/><path d="M0 12.5H9" stroke="#555" stroke-width="1"/><path d="M6.75 11.649999999999999V8.675Q6.75 6.21 11 6.21Q15.25 6.21 15.25 8.675V11.649999999999999Z" fill="#3A68D8" stroke="#3A1A1A" stroke-width="0.5"/><path d="M9.725 6.38L11 8.25L12.275 6.38Z" fill="#FFFFFF" opacity="0.8"/><circle cx="11" cy="4" r="2.21" fill="#F6C8B0"/><path d="M8.79 4.51Q8.620000000000001 1.4500000000000002 11 1.62Q13.379999999999999 1.4500000000000002 13.21 4.51" fill="none" stroke="#2A1A10" stroke-width="0.935"/><rect x="8" y="10" width="6" height="5" fill="#E01A1A" stroke="#801010" stroke-width="0.5"/></svg>
<svg style="left:946px;top:73px" width="16" height="16" viewBox="0 0 16 16"><path d="M0.5 1.5H8L10.5 4V12.5H0.5Z" fill="#FBFBFB" stroke="#9A9A9A"/><path d="M2 4H7M2 4L4.5 7L2 10H7" fill="none" stroke="#222" stroke-width="1.1"/><path d="M0 12.5H9" stroke="#555" stroke-width="1"/><path d="M6.75 11.649999999999999V8.675Q6.75 6.21 11 6.21Q15.25 6.21 15.25 8.675V11.649999999999999Z" fill="#E04A3A" stroke="#3A1A1A" stroke-width="0.5"/><path d="M9.725 6.38L11 8.25L12.275 6.38Z" fill="#FFFFFF" opacity="0.8"/><circle cx="11" cy="4" r="2.21" fill="#F6C8B0"/><path d="M8.79 4.51Q8.620000000000001 1.4500000000000002 11 1.62Q13.379999999999999 1.4500000000000002 13.21 4.51" fill="none" stroke="#2A1A10" stroke-width="0.935"/><rect x="9" y="10" width="6" height="5" fill="#2A4AD0" stroke="#101060" stroke-width="0.5"/></svg>
<svg style="left:969px;top:73px" width="16" height="16" viewBox="0 0 16 16"><path d="M0.5 1.5H8L10.5 4V12.5H0.5Z" fill="#FBFBFB" stroke="#9A9A9A"/><path d="M2 4H7M2 4L4.5 7L2 10H7" fill="none" stroke="#222" stroke-width="1.1"/><path d="M0 12.5H9" stroke="#555" stroke-width="1"/><path d="M8.5 11.3V8.85Q8.5 6.82 12 6.82Q15.5 6.82 15.5 8.85V11.3Z" fill="#3A68D8" stroke="#3A1A1A" stroke-width="0.5"/><path d="M10.95 6.96L12 8.5L13.05 6.96Z" fill="#FFFFFF" opacity="0.8"/><circle cx="12" cy="5" r="1.8199999999999998" fill="#F6C8B0"/><path d="M10.18 5.42Q10.040000000000001 2.9000000000000004 12 3.04Q13.959999999999999 2.9000000000000004 13.82 5.42" fill="none" stroke="#2A1A10" stroke-width="0.77"/><path d="M4.0 15.2V12.4Q4.0 10.08 8 10.08Q12.0 10.08 12.0 12.4V15.2Z" fill="#E04A3A" stroke="#3A1A1A" stroke-width="0.5"/><path d="M6.8 10.24L8 12.0L9.2 10.24Z" fill="#FFFFFF" opacity="0.8"/><circle cx="8" cy="8" r="2.08" fill="#F6C8B0"/><path d="M5.92 8.48Q5.76 5.6 8 5.76Q10.24 5.6 10.08 8.48" fill="none" stroke="#2A1A10" stroke-width="0.8800000000000001"/></svg>
<svg style="left:992px;top:73px" width="16" height="16" viewBox="0 0 16 16"><path d="M0.5 1.5H8L10.5 4V12.5H0.5Z" fill="#FBFBFB" stroke="#9A9A9A"/><path d="M2 4H7M2 4L4.5 7L2 10H7" fill="none" stroke="#222" stroke-width="1.1"/><path d="M0 12.5H9" stroke="#555" stroke-width="1"/><rect x="10" y="2" width="6" height="5" fill="#E01818" stroke="#801010" stroke-width="0.5"/><rect x="9.2" y="2" width="1" height="9" fill="#444"/><path d="M6 11.5H15L16 10.5V14L15 15H6Z" fill="#3434A8" stroke="#12124A" stroke-width="0.5"/><rect x="7.3" y="12.6" width="1.4" height="1.3" fill="#fff"/><rect x="9.6" y="12.6" width="1.4" height="1.3" fill="#fff"/><rect x="11.899999999999999" y="12.6" width="1.4" height="1.3" fill="#fff"/></svg>
<svg style="left:1015px;top:73px" width="16" height="16" viewBox="0 0 16 16"><path d="M0.5 1.5H8L10.5 4V12.5H0.5Z" fill="#FBFBFB" stroke="#9A9A9A"/><path d="M2 4H7M2 4L4.5 7L2 10H7" fill="none" stroke="#222" stroke-width="1.1"/><path d="M0 12.5H9" stroke="#555" stroke-width="1"/><rect x="10" y="2" width="6" height="5" fill="#E01818" stroke="#801010" stroke-width="0.5"/><rect x="9.2" y="2" width="1" height="9" fill="#444"/><rect x="9" y="11" width="6" height="4" fill="#E8A040" stroke="#6A4010" stroke-width="0.6"/></svg>
<svg style="left:1038px;top:73px" width="16" height="16" viewBox="0 0 16 16"><path d="M0.5 1.5H8L10.5 4V12.5H0.5Z" fill="#FBFBFB" stroke="#9A9A9A"/><path d="M2 4H7M2 4L4.5 7L2 10H7" fill="none" stroke="#222" stroke-width="1.1"/><path d="M0 12.5H9" stroke="#555" stroke-width="1"/><rect x="10" y="2" width="6" height="5" fill="#E01818" stroke="#801010" stroke-width="0.5"/><rect x="9.2" y="2" width="1" height="9" fill="#444"/><path d="M7 11.5H15L16 10.5V14L15 15H7Z" fill="#4A8AE0" stroke="#12124A" stroke-width="0.5"/><rect x="8.3" y="12.6" width="1.4" height="1.3" fill="#fff"/><rect x="10.600000000000001" y="12.6" width="1.4" height="1.3" fill="#fff"/><rect x="12.9" y="12.6" width="1.4" height="1.3" fill="#fff"/></svg>
<svg style="left:1062px;top:73px" width="16" height="16" viewBox="0 0 16 16"><path d="M0.5 1.5H8L10.5 4V12.5H0.5Z" fill="#FBFBFB" stroke="#9A9A9A"/><path d="M2 4H7M2 4L4.5 7L2 10H7" fill="none" stroke="#222" stroke-width="1.1"/><path d="M0 12.5H9" stroke="#555" stroke-width="1"/><rect x="8.5" y="4.5" width="6" height="11" fill="#EEE" stroke="#666"/><rect x="10" y="6" width="3.5" height="1" fill="#555"/><rect x="10" y="8" width="3.5" height="1" fill="#555"/><rect x="10" y="10" width="3.5" height="1" fill="#555"/><rect x="10" y="12" width="3.5" height="1" fill="#555"/></svg>
<svg style="left:1084px;top:73px" width="16" height="16" viewBox="0 0 16 16"><path d="M0.5 1.5H8L10.5 4V12.5H0.5Z" fill="#FBFBFB" stroke="#9A9A9A"/><path d="M2 4H7M2 4L4.5 7L2 10H7" fill="none" stroke="#222" stroke-width="1.1"/><path d="M0 12.5H9" stroke="#555" stroke-width="1"/><path d="M8 9L11 12L15.5 6.5" stroke="#28A83A" stroke-width="2.4" fill="none"/></svg>
<svg style="left:1106px;top:86px" width="7" height="5"><path d="M0 0H7L3.5 4.5Z" fill="#2F2A22"/></svg>
<div class="a" style="left:0;top:95px;width:1364px;height:1px;background:#4a4a4a"></div>
<div class="a" style="left:0;top:95px;width:2px;height:600px;background:#555"></div>
<div class="a" style="left:1362px;top:95px;width:1px;height:600px;background:#D6D2CA"></div>
<div class="a" style="left:2px;top:96px;width:1360px;height:18px;background:#CCCCCC"></div>
<div class="a" style="left:2px;top:114px;width:1360px;height:1px;background:#5a5a5a"></div>
<svg style="left:5px;top:97px" width="12" height="15"><path d="M0.5 0.5H8L11.5 4V14.5H0.5Z" fill="#F7F9FC" stroke="#A9AFB8"/><path d="M1 10H11V14H1Z" fill="#DCE4F1"/></svg>
<div class="a nw" style="left:24px;top:98px;font-weight:bold;font-size:12px;letter-spacing:0px;line-height:14px;color:#141414">Задолженность клиента</div>
<div class="a" style="left:1308px;top:107px;width:8px;height:3px;background:#111"></div>
<svg style="left:1326px;top:99px" width="11" height="11"><rect x="3.5" y="0.5" width="7" height="6" fill="none" stroke="#111"/><rect x="3" y="0" width="8" height="2" fill="#111"/><rect x="0.5" y="3.5" width="7" height="7" fill="#CCCCCC" stroke="#111"/><rect x="0" y="3" width="8" height="2" fill="#111"/></svg>
<svg style="left:1348px;top:100px" width="9" height="9"><path d="M0.7 0.7L8.3 8.3M8.3 0.7L0.7 8.3" stroke="#111" stroke-width="1.8"/></svg>
<div class="a" style="left:2px;top:115px;width:1360px;height:24px;background:linear-gradient(#F7F3EF 0 1px,#EFE6DE 2px,#EEE6E0 85%,#EEE8DC)"></div>
<div class="a" style="left:2px;top:139px;width:1360px;height:1px;background:#ABA692"></div>
<div class="a" style="left:2px;top:140px;width:1360px;height:555px;background:#FCFAF5"></div>
<svg style="left:6px;top:118px" width="16" height="16"><path d="M1 4L8 0.5L15 4Z" fill="#1E8A2A"/><rect x="0.5" y="3.5" width="15" height="11.5" fill="#BDEFFA" stroke="#1A4A5A"/><text x="2.6" y="12.6" font-family="Liberation Sans" font-size="10.5" fill="#2A6AB8">@</text></svg>
<div class="a" style="left:27px;top:119px;width:2px;height:16px;border-left:1px solid #D3CCC0;border-right:1px solid #FAF8F4"></div>
<svg style="left:34px;top:119px" width="16" height="16"><circle cx="8" cy="8" r="7.4" fill="#F4C47A" stroke="#A8783A" stroke-width="0.9"/><circle cx="7" cy="6" r="4.5" fill="#FAE0B0" opacity="0.6"/><text x="4.6" y="11.7" font-family="Liberation Sans" font-weight="bold" font-size="10" fill="#5A3A20">?</text></svg>
<div class="a" style="left:10px;top:148px;width:1344px;height:539px;border:1px solid #ABA692;background:#fff"></div>
<div class="a" style="left:11px;top:149px;width:41px;height:521px;background:#FCFAF3"></div>
<div class="a" style="left:52px;top:149px;width:1px;height:521px;background:#B0A993"></div>
<div class="a nw" style="left:57.6px;top:172px;font-size:16px;font-weight:bold;color:#000;line-height:18px">Отчет "ЗАДОЛЖЕННОСТЬ КОНТРАГЕНТОВ"</div>
<div class="a nw doc" style="left:54px;top:199.5px;">На дату:</div>
<div class="a nw doc" style="left:183.7px;top:199.5px;letter-spacing:0.15px">2 февраля 2014 г.</div>
<div class="a nw doc" style="left:54px;top:228.5px;">Отборы:</div>
<div class="a nw doc" style="left:109.7px;top:228.5px;">Организация:</div>
<div class="a nw doc" style="left:183.7px;top:228.5px;">ООО ХозТорг</div>
<div class="a nw doc" style="left:109.7px;top:243.5px;">Контрагенты:</div>
<div class="a nw doc" style="left:184px;top:243.5px;">ГОРДЕЕВ</div>
<div class="a" style="left:53px;top:272px;width:697px;height:398px;overflow:hidden">
<div class="a" style="left:0px;top:0px;width:697px;height:33px;background:#6D7F9B"></div>
<div class="cell" style="left:0px;top:10px;font-weight:bold;font-style:italic;font-size:13px;color:#fff;line-height:15px;text-align:center;width:187px">Организация/Контрагент</div>
<div class="cell" style="left:187px;top:10px;font-weight:bold;font-style:italic;font-size:13px;color:#fff;line-height:15px;text-align:center;width:154px">Документ</div>
<div class="cell" style="left:341px;top:1.5px;font-weight:bold;font-style:italic;font-size:13px;color:#fff;line-height:15px;text-align:center;width:139px">Сумма по<br>документу</div>
<div class="cell" style="left:480px;top:10px;font-weight:bold;font-style:italic;font-size:13px;color:#fff;line-height:15px;text-align:center;width:128px">Сумма просрочки</div>
<div class="cell" style="left:608px;top:1.5px;font-weight:bold;font-style:italic;font-size:13px;color:#fff;line-height:15px;text-align:center;width:88px">Просрочено<br>дней</div>
<div class="a" style="left:0px;top:33px;width:697px;height:21px;background:#8EA6CE"></div>
<div class="cell" style="left:5px;top:35px;font-weight:bold;font-size:16px;letter-spacing:0px;color:#000;line-height:17px">ООО ХозТорг</div>
<div class="cell" style="left:341px;top:36px;font-weight:bold;font-size:15.5px;color:#000;line-height:17px;text-align:right;width:134px">1 750 058,94</div>
<div class="cell" style="left:480px;top:36px;font-weight:bold;font-size:15.5px;color:#000;line-height:17px;text-align:right;width:123px">451 115,28</div>
<div class="a" style="left:0px;top:54px;width:697px;height:49px;background:#B4CDF8"></div>
<div class="cell" style="left:3px;top:55.5px;font-weight:bold;font-size:13px;letter-spacing:0.1px;color:#000;line-height:15.6px">Александрова Надежда<br>Николаевна ИП<br>(г.Лысково,ул.Крылова, 45)</div>
<div class="cell" style="left:341px;top:88.5px;font-weight:bold;font-size:12.5px;color:#000;line-height:15px;text-align:right;width:136px">-638,40</div>
<div class="a" style="left:0px;top:103px;width:697px;height:15px;background:#fff"></div>
<div class="cell" style="left:190.5px;top:104.5px;font-size:10.67px;color:#000;line-height:13px">УХТ-0001035 от 29.01.2014</div>
<div class="cell" style="left:341px;top:104.5px;font-size:10.67px;color:#000;line-height:13px;width:136px;text-align:right">-638,40</div>
<div class="a" style="left:0px;top:118px;width:697px;height:33px;background:#B4CDF8"></div>
<div class="cell" style="left:3px;top:119.5px;font-weight:bold;font-size:13px;letter-spacing:0.1px;color:#000;line-height:15.6px">Алякшин В.С. ИП<br>(Темников)</div>
<div class="cell" style="left:341px;top:136.5px;font-weight:bold;font-size:12.5px;color:#000;line-height:15px;text-align:right;width:136px">9 610,00</div>
<div class="a" style="left:0px;top:151px;width:697px;height:15px;background:#fff"></div>
<div class="cell" style="left:190.5px;top:152.5px;font-size:10.67px;color:#000;line-height:13px">УХТ-0001233 от 31.01.2014</div>
<div class="cell" style="left:341px;top:152.5px;font-size:10.67px;color:#000;line-height:13px;width:136px;text-align:right">9 610,00</div>
<div class="a" style="left:0px;top:166px;width:697px;height:49px;background:#B4CDF8"></div>
<div class="cell" style="left:3px;top:167.5px;font-weight:bold;font-size:13px;letter-spacing:0.1px;color:#000;line-height:15.6px">Асессорова Светлана<br>Владиславовна ИП<br>(г.Арзамас)</div>
<div class="cell" style="left:341px;top:200.5px;font-weight:bold;font-size:12.5px;color:#000;line-height:15px;text-align:right;width:136px">13 398,53</div>
<div class="a" style="left:0px;top:215px;width:697px;height:15px;background:#fff"></div>
<div class="cell" style="left:190.5px;top:216.5px;font-size:10.67px;color:#000;line-height:13px">УХТ-0001138 от 30.01.2014</div>
<div class="cell" style="left:341px;top:216.5px;font-size:10.67px;color:#000;line-height:13px;width:136px;text-align:right">2 788,90</div>
<div class="a" style="left:0px;top:230px;width:697px;height:15px;background:#fff"></div>
<div class="cell" style="left:190.5px;top:231.5px;font-size:10.67px;color:#000;line-height:13px">УХТ-0001022 от 28.01.2014</div>
<div class="cell" style="left:341px;top:231.5px;font-size:10.67px;color:#000;line-height:13px;width:136px;text-align:right">1 404,10</div>
<div class="a" style="left:0px;top:245px;width:697px;height:15px;background:#fff"></div>
<div class="cell" style="left:190.5px;top:246.5px;font-size:10.67px;color:#000;line-height:13px">УХТ-0000959 от 27.01.2014</div>
<div class="cell" style="left:341px;top:246.5px;font-size:10.67px;color:#000;line-height:13px;width:136px;text-align:right">2 943,10</div>
<div class="a" style="left:0px;top:260px;width:697px;height:15px;background:#fff"></div>
<div class="cell" style="left:190.5px;top:261.5px;font-size:10.67px;color:#000;line-height:13px">УХТ-0000961 от 27.01.2014</div>
<div class="cell" style="left:341px;top:261.5px;font-size:10.67px;color:#000;line-height:13px;width:136px;text-align:right">6 262,43</div>
<div class="a" style="left:0px;top:275px;width:697px;height:17px;background:#B4CDF8"></div>
<div class="cell" style="left:3px;top:276.5px;font-weight:bold;font-size:13px;letter-spacing:0.1px;color:#000;line-height:15.6px">Атлант ООО(г.Арзамас)</div>
<div class="cell" style="left:341px;top:277.5px;font-weight:bold;font-size:12.5px;color:#000;line-height:15px;text-align:right;width:136px">49 796,80</div>
<div class="cell" style="left:480px;top:277.5px;font-weight:bold;font-size:12.5px;color:#000;line-height:15px;text-align:right;width:125px">15 053,50</div>
<div class="a" style="left:0px;top:292px;width:697px;height:15px;background:#fff"></div>
<div class="cell" style="left:190.5px;top:293.5px;font-size:10.67px;color:#000;line-height:13px">УХТ-0000984 от 27.01.2014</div>
<div class="cell" style="left:341px;top:293.5px;font-size:10.67px;color:#000;line-height:13px;width:136px;text-align:right">10 991,60</div>
<div class="a" style="left:0px;top:307px;width:697px;height:15px;background:#fff"></div>
<div class="cell" style="left:190.5px;top:308.5px;font-size:10.67px;color:#000;line-height:13px">УХТ-0000341 от 13.01.2014</div>
<div class="cell" style="left:341px;top:308.5px;font-size:10.67px;color:#000;line-height:13px;width:136px;text-align:right">1 552,20</div>
<div class="a" style="left:0px;top:322px;width:697px;height:15px;background:#fff"></div>
<div class="cell" style="left:190.5px;top:323.5px;font-size:10.67px;color:#000;line-height:13px">УХТ-0000320 от 13.01.2014</div>
<div class="cell" style="left:341px;top:323.5px;font-size:10.67px;color:#000;line-height:13px;width:136px;text-align:right">11 306,70</div>
<div class="a" style="left:0px;top:337px;width:697px;height:15px;background:#fff"></div>
<div class="cell" style="left:190.5px;top:338.5px;font-size:10.67px;color:#000;line-height:13px">УХТ-0000118 от 08.01.2014</div>
<div class="cell" style="left:341px;top:338.5px;font-size:10.67px;color:#000;line-height:13px;width:136px;text-align:right">10 892,80</div>
<div class="a" style="left:0px;top:352px;width:697px;height:15px;background:#fff"></div>
<div class="cell" style="left:190.5px;top:353.5px;font-size:10.67px;color:#000;line-height:13px">УХТ-0020339 от 23.12.2013</div>
<div class="cell" style="left:341px;top:353.5px;font-size:10.67px;color:#000;line-height:13px;width:136px;text-align:right">15 053,50</div>
<div class="cell" style="left:480px;top:353.5px;font-size:10.67px;color:#000;line-height:13px;width:125.5px;text-align:right">15 053,50</div>
<div class="cell" style="left:608px;top:353.5px;font-size:10.67px;color:#000;line-height:13px;width:85px;text-align:right">11</div>
<div class="a" style="left:0px;top:367px;width:697px;height:49px;background:#B4CDF8"></div>
<div class="cell" style="left:3px;top:368.5px;font-weight:bold;font-size:13px;letter-spacing:0.1px;color:#000;line-height:15.6px">Баринов Андрей<br>Александрович ИП<br>(г.Арзамас)</div>
<div class="hl" style="left:0;top:0px;width:697px"></div>
<div class="hl" style="left:0;top:33px;width:697px"></div>
<div class="hl" style="left:0;top:54px;width:697px"></div>
<div class="hl" style="left:0;top:103px;width:697px"></div>
<div class="hl" style="left:0;top:118px;width:697px"></div>
<div class="hl" style="left:0;top:151px;width:697px"></div>
<div class="hl" style="left:0;top:166px;width:697px"></div>
<div class="hl" style="left:0;top:215px;width:697px"></div>
<div class="hl" style="left:0;top:230px;width:697px"></div>
<div class="hl" style="left:0;top:245px;width:697px"></div>
<div class="hl" style="left:0;top:260px;width:697px"></div>
<div class="hl" style="left:0;top:275px;width:697px"></div>
<div class="hl" style="left:0;top:292px;width:697px"></div>
<div class="hl" style="left:0;top:307px;width:697px"></div>
<div class="hl" style="left:0;top:322px;width:697px"></div>
<div class="hl" style="left:0;top:337px;width:697px"></div>
<div class="hl" style="left:0;top:352px;width:697px"></div>
<div class="hl" style="left:0;top:367px;width:697px"></div>
<div class="vl" style="left:187px;top:0;height:398px"></div>
<div class="vl" style="left:341px;top:0;height:398px"></div>
<div class="vl" style="left:480px;top:0;height:398px"></div>
<div class="vl" style="left:608px;top:0;height:398px"></div>
<div class="vl" style="left:696px;top:0;height:398px"></div>
</div>
<div class="a" style="left:749px;top:593px;width:64px;height:17px;border:2px solid #000;background:#C9CDE2"></div>
<div class="a" style="left:14px;top:311px;width:11px;height:11px;border:1px solid #C8C0AC;background:#FFFDF8"></div>
<div class="a" style="left:16px;top:316px;width:7px;height:1px;background:#222"></div>
<div class="a" style="left:19px;top:322px;width:1px;height:348px;background:#B8B09C"></div>
<div class="a" style="left:27px;top:347px;width:11px;height:11px;border:1px solid #C8C0AC;background:#FFFDF8"></div>
<div class="a" style="left:29px;top:352px;width:7px;height:1px;background:#222"></div>
<div class="a" style="left:32px;top:358px;width:1px;height:32px;background:#B8B09C"></div>
<div class="a" style="left:32px;top:390px;width:5px;height:1px;background:#B8B09C"></div>
<div class="a" style="left:27px;top:402px;width:11px;height:11px;border:1px solid #C8C0AC;background:#FFFDF8"></div>
<div class="a" style="left:29px;top:407px;width:7px;height:1px;background:#222"></div>
<div class="a" style="left:32px;top:413px;width:1px;height:25px;background:#B8B09C"></div>
<div class="a" style="left:32px;top:438px;width:5px;height:1px;background:#B8B09C"></div>
<div class="a" style="left:27px;top:458px;width:11px;height:11px;border:1px solid #C8C0AC;background:#FFFDF8"></div>
<div class="a" style="left:29px;top:463px;width:7px;height:1px;background:#222"></div>
<div class="a" style="left:32px;top:469px;width:1px;height:78px;background:#B8B09C"></div>
<div class="a" style="left:32px;top:547px;width:5px;height:1px;background:#B8B09C"></div>
<div class="a" style="left:27px;top:551px;width:11px;height:11px;border:1px solid #C8C0AC;background:#FFFDF8"></div>
<div class="a" style="left:29px;top:556px;width:7px;height:1px;background:#222"></div>
<div class="a" style="left:32px;top:562px;width:1px;height:77px;background:#B8B09C"></div>
<div class="a" style="left:32px;top:639px;width:5px;height:1px;background:#B8B09C"></div>
<div class="a" style="left:27px;top:659px;width:11px;height:11px;border:1px solid #C8C0AC;background:#FFFDF8"></div>
<div class="a" style="left:29px;top:664px;width:7px;height:1px;background:#222"></div>
<div class="a" style="left:1337px;top:149px;width:16px;height:521px;background:#FDFBF3;border-left:1px solid #ABA596"></div>
<div class="a" style="left:1338px;top:149px;width:15px;height:20px;background:linear-gradient(90deg,#FBF9F0,#F1EEDF);border-bottom:1px solid #B5AE9C"></div>
<svg style="left:1341px;top:154px" width="9" height="6"><path d="M4.5 0L9 6H0Z" fill="#C9C6BE"/></svg>
<div class="a" style="left:1338px;top:169px;width:15px;height:65px;background:linear-gradient(90deg,#F6F2DF,#EDE4C4);border-bottom:1px solid #B5AE9C"></div>
<div class="a" style="left:1343px;top:199px;width:4px;height:4px;border-radius:2px;background:#C9C3AE"></div>
<div class="a" style="left:1338px;top:650px;width:15px;height:20px;background:linear-gradient(90deg,#F7F4E8,#ECE8D8);border-top:1px solid #B5AE9C"></div>
<svg style="left:1341px;top:657px" width="9" height="6"><path d="M0 0H9L4.5 6Z" fill="#6E6C66"/></svg>
<div class="a" style="left:11px;top:670px;width:1342px;height:17px;background:#FDFBF3;border-top:1px solid #A9A799"></div>
<div class="a" style="left:11px;top:671px;width:20px;height:15px;background:linear-gradient(#FBF9F0,#F1EEDF);border-right:1px solid #B5AE9C"></div>
<svg style="left:17px;top:674px" width="6" height="9"><path d="M0 4.5L6 0V9Z" fill="#CFCCC4"/></svg>
<div class="a" style="left:31px;top:671px;width:1157px;height:15px;background:linear-gradient(#FAF9E9,#F5EBD6 55%,#E6DEC4);border-right:1px solid #B5AE9C"></div>
<div class="a" style="left:608px;top:676px;width:3px;height:4px;border-left:2px solid #9C9890;border-top:2px solid #9C9890"></div>
<div class="a" style="left:1316px;top:671px;width:21px;height:15px;background:linear-gradient(#F7F4E8,#ECE8D8);border-left:1px solid #B5AE9C"></div>
<svg style="left:1324px;top:674px" width="6" height="9"><path d="M0 0L6 4.5L0 9Z" fill="#6E6C66"/></svg>
<div class="a" style="left:1337px;top:670px;width:16px;height:17px;background:#FDFBF3;border-left:1px solid #B5AE9C"></div>
<div class="a" style="left:11px;top:686px;width:1343px;height:1px;background:#ABA596"></div>
<div class="a" style="left:2px;top:687px;width:1360px;height:8px;background:#FDFBF6"></div>
<div class="a" style="left:0;top:695px;width:1364px;height:1px;background:#F8F5F0"></div>
<div class="a" style="left:0;top:696px;width:1364px;height:23px;background:#EEE7DF"></div>
<div class="a" style="left:2px;top:698px;width:171px;height:20px;background:#B9B5B7"></div>
<div class="a" style="left:174px;top:698px;width:172px;height:20px;background:#B9B5B7"></div>
<div class="a" style="left:173px;top:698px;width:1px;height:20px;background:#E9E2D2"></div>
<svg style="left:5px;top:701px" width="12" height="14"><path d="M0.5 0.5H8L11.5 4V13.5H0.5Z" fill="#F8F8FA" stroke="#9BA3B0"/><rect x="2" y="7" width="2" height="5" fill="#D9534F"/><rect x="5" y="5" width="2" height="7" fill="#E8A13A"/><rect x="8" y="8" width="2" height="4" fill="#5DAA4A"/></svg>
<div class="a nw" style="left:20.8px;top:702px;line-height:13px;color:#2a2418">Отчет&nbsp; Задолженность конт...</div>
<svg style="left:178px;top:701px" width="12" height="14"><path d="M0.5 0.5H8L11.5 4V13.5H0.5Z" fill="#F7F9FC" stroke="#A9AFB8"/><path d="M1 9H11V13H1Z" fill="#DCE4F1"/></svg>
<div class="a nw" style="left:193.5px;top:702px;line-height:13px;color:#2a2418">Задолженность клиента</div>
<div class="a" style="left:0;top:719px;width:1364px;height:1px;background:#DDD6CB"></div>
<div class="a" style="left:0;top:720px;width:1364px;height:21px;background:#EEE7DF"></div>
<div class="a" style="left:0;top:720px;width:1291px;height:19px;border:1px solid #DCD5CA;border-right-color:#FBF9F4;border-bottom-color:#FBF9F4"></div>
<div class="a" style="left:1296px;top:720px;width:29px;height:19px;border:1px solid #DCD5CA;border-right-color:#FBF9F4;border-bottom-color:#FBF9F4"></div>
<div class="a" style="left:1330px;top:720px;width:33px;height:19px;border:1px solid #DCD5CA;border-right-color:#FBF9F4;border-bottom-color:#FBF9F4"></div>
<div class="a nw" style="left:4.4px;top:723px;line-height:13px;color:#2a2418">Команды работы с файлами</div>
<div class="a nw" style="left:1299px;top:723px;line-height:13px;color:#9B9587">CAP</div>
<div class="a nw" style="left:1333px;top:723px;line-height:13px;color:#2a2418">NUM</div>
<div class="a" style="left:0;top:741px;width:1364px;height:27px;background:#D4D0C8;border-top:1px solid #FFFFFF"></div>
<div class="a" style="left:2px;top:744px;width:52px;height:22px;background:#D4D0C8;border-top:1px solid #fff;border-left:1px solid #fff;border-right:1px solid #404040;border-bottom:1px solid #404040;box-shadow:inset -1px -1px 0 #808080"></div>
<svg style="left:5px;top:747px" width="15" height="15"><path d="M4 1.5Q6 0.5 7.5 1.5L6.5 6.5Q5 5.5 3 6.5Z" fill="#E8582A"/><path d="M8.5 2Q10.5 3 13 2L12 7Q10 7.8 7.5 7Z" fill="#5DB52E"/><path d="M2.5 7.5Q4.5 6.5 6.5 7.5L5.5 12.5Q3.5 11.5 1.5 12.5Z" fill="#2F8FE0"/><path d="M7.5 8Q10 8.8 12 8L11 13Q9 13.8 6.5 13Z" fill="#F5C22A"/></svg>
<div class="a nw" style="left:20.8px;top:748px;font-weight:bold;font-size:11px;letter-spacing:0.3px;line-height:14px;color:#000">Пуск</div>
<div class="a" style="left:59px;top:745px;width:3px;height:20px;border-left:1px solid #fff;border-right:1px solid #808080"></div>
<svg style="left:71px;top:747px" width="16" height="16"><rect x="1" y="0.5" width="6" height="13" fill="#C9CED6" stroke="#7D8590"/><rect x="2" y="2.5" width="4" height="1" fill="#50565E"/><rect x="2" y="5" width="4" height="1" fill="#50565E"/><rect x="6.5" y="9.5" width="9" height="6" fill="#B6BDC8" stroke="#6C7480"/><rect x="8" y="11" width="6" height="1" fill="#4E5560"/></svg>
<svg style="left:93px;top:748px" width="16" height="14"><rect x="0.5" y="0.5" width="15" height="11" fill="#2350B8" stroke="#1A2D66"/><rect x="2" y="2" width="12" height="7" fill="#3A6FE0"/><rect x="1" y="9" width="14" height="2" fill="#1E2A3E"/><rect x="2" y="9.5" width="2" height="1" fill="#3DC43D"/></svg>
<div class="a" style="left:165px;top:745px;width:3px;height:20px;border-left:1px solid #fff;border-right:1px solid #808080"></div>
<div class="a" style="left:172px;top:744px;width:159px;height:22px;background-color:#EAE8E4;background-image:repeating-conic-gradient(#FFFFFF 0 25%,#D4D0C8 0 50%);background-size:2px 2px;border-top:1px solid #404040;border-left:1px solid #404040;border-right:1px solid #fff;border-bottom:1px solid #fff;box-shadow:inset 1px 1px 0 #808080"></div>
<svg style="left:177px;top:747px" width="16" height="16" viewBox="0 0 16 16"><defs><radialGradient id="lg2" cx="0.45" cy="0.35" r="0.7"><stop offset="0" stop-color="#FFFBE8"/><stop offset="0.6" stop-color="#FBE27A"/><stop offset="1" stop-color="#F0B040"/></radialGradient></defs><circle cx="8" cy="8" r="7.2" fill="url(#lg2)"/><path d="M2.8 6.2L5 4.6H6.6V11.6H4.8V6.6L3.4 7.4Z" fill="#C8300E"/><path d="M12.2 5.6Q11.2 4.3 9.6 4.4Q7.4 4.6 7.4 7.3Q7.5 9.4 9.4 9.6" fill="none" stroke="#D8200E" stroke-width="1.7"/><rect x="8.8" y="9.3" width="5.6" height="2" fill="#D8200E"/></svg>
<div class="a nw" style="left:197px;top:749px;font-weight:bold;font-size:11px;letter-spacing:0.4px;line-height:14px;color:#000">1С:Предприятие - Уп...</div>
<div class="a" style="left:335px;top:744px;width:159px;height:22px;background:#D4D0C8;border-top:1px solid #fff;border-left:1px solid #fff;border-right:1px solid #404040;border-bottom:1px solid #404040;box-shadow:inset -1px -1px 0 #808080"></div>
<svg style="left:340px;top:747px" width="16" height="16"><circle cx="8" cy="8" r="7.5" fill="#2A52B8" stroke="#1C3A8A"/><circle cx="8" cy="8" r="5.5" fill="#3D6FD8"/><text x="4.3" y="12" font-family="Liberation Sans" font-weight="bold" font-size="10" fill="#fff">?</text></svg>
<div class="a nw" style="left:358px;top:749px;font-size:11px;line-height:14px;color:#000;letter-spacing:0.15px">Справка и поддержка</div>
<div class="a" style="left:497px;top:744px;width:161px;height:22px;background:#D4D0C8;border-top:1px solid #fff;border-left:1px solid #fff;border-right:1px solid #404040;border-bottom:1px solid #404040;box-shadow:inset -1px -1px 0 #808080"></div>
<svg style="left:502px;top:746px" width="16" height="18"><path d="M9 1L12 3L7 11L5 10Z" fill="#D9A35A"/><path d="M4 10L7 12Q6 16 2 17Q4 14 4 10Z" fill="#D8362A"/><circle cx="11" cy="3" r="2" fill="#E6C060"/></svg>
<div class="a nw" style="left:520.3px;top:749px;font-size:11px;line-height:14px;color:#000;letter-spacing:-0.1px">Безымянный - Paint</div>
<div class="a" style="left:1241px;top:745px;width:3px;height:20px;border-left:1px solid #fff;border-right:1px solid #808080"></div>
<div class="a nw" style="left:1251px;top:749px;font-size:11px;line-height:14px;color:#000">EN</div>
<div class="a" style="left:1272px;top:744px;width:92px;height:22px;border-top:1px solid #808080;border-left:1px solid #808080"></div>
<svg style="left:1279px;top:746px" width="18" height="18"><rect x="2" y="1" width="5" height="9" fill="#8A8E96"/><rect x="1" y="8" width="7" height="8" fill="#6A6E76"/><circle cx="12" cy="12" r="5" fill="#3BAA3B"/><path d="M9.5 12L11.5 14L14.5 10" stroke="#fff" stroke-width="1.5" fill="none"/></svg>
<svg style="left:1300px;top:746px" width="16" height="18"><path d="M1 2L7 8L13 1V12L7 17Z" fill="#D62828"/><path d="M8 10L14 15" stroke="#111" stroke-width="2"/></svg>
<svg style="left:1325px;top:747px" width="17" height="17"><rect x="0.5" y="4.5" width="10" height="8" fill="#3A70C8" stroke="#1D3F80"/><rect x="5.5" y="0.5" width="10" height="8" fill="#4A88E0" stroke="#1D3F80"/><circle cx="11" cy="12" r="4" fill="#3BAA3B"/></svg>
<svg style="left:1343px;top:747px" width="18" height="17"><path d="M1 5H4L8 1V15L4 11H1Z" fill="#E6E6E6" stroke="#888"/><circle cx="12" cy="12" r="4.5" fill="#D63A3A"/><path d="M10 10L14 14M14 10L10 14" stroke="#fff" stroke-width="1.4"/></svg>
</body></html>
